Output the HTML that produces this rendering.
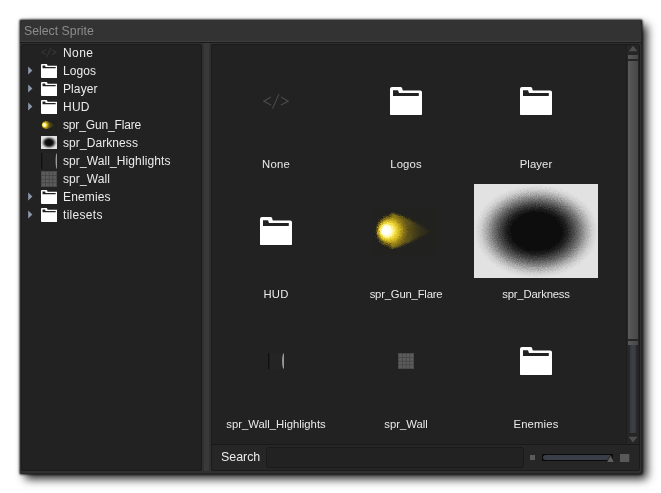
<!DOCTYPE html>
<html>
<head>
<meta charset="utf-8">
<title>Select Sprite</title>
<style>
html,body{margin:0;padding:0;background:#fff;}
body{width:661px;height:493px;position:relative;overflow:hidden;font-family:"Liberation Sans",sans-serif;}
.abs{position:absolute;display:block;}
.t,.lbl,#ttext,#stext{will-change:transform;}
#win{left:20px;top:20px;width:622px;height:454px;background:#303030;border-radius:2px;box-shadow:inset -1px -1px 0 #262626,0 0 2px 0.5px rgba(0,0,0,0.65),5px 5px 10px 0 rgba(0,0,0,0.85);}
#title{left:20px;top:20px;width:621px;height:21px;border-radius:2px 2px 0 0;background:#333333;border-bottom:1px solid #3e3e3e;}
#ttext{left:24px;top:24px;font-size:12.3px;line-height:15px;color:#8c8c8c;white-space:nowrap;}
#tline{left:20px;top:42px;width:622px;height:1px;background:#1a1a1a;}
.panel{background:#222222;border:1px solid #1b1b1b;border-radius:2px;box-sizing:border-box;}
#left{left:21px;top:44px;width:181px;height:427px;}
#split{left:204px;top:43px;width:5px;height:428px;background:#393939;}
#right{left:211px;top:44px;width:429px;height:427px;}
.t{font-size:12px;line-height:15px;color:#ebebeb;white-space:nowrap;}
.lbl{width:200px;text-align:center;font-size:11.3px;line-height:14px;color:#e9e9e9;white-space:nowrap;}
.dark{background:radial-gradient(ellipse closest-side at 50% 50%, #050505 0%, #080808 36%, #2c2c2c 52%, #6e6e6e 68%, #b4b4b4 82%, #dadada 93%, #e2e2e2 100%);background-color:#e2e2e2;}
#sbar{left:626px;top:45px;width:13px;height:399px;background:#262626;border-left:1px solid #1e1e1e;box-sizing:border-box;}
#bottom{left:212px;top:444px;width:427px;height:26px;background:#262626;border-top:1px solid #191919;box-sizing:border-box;border-radius:0 0 2px 2px;}
#stext{left:221.2px;top:449.5px;font-size:12.4px;line-height:15px;color:#ececec;}
#inp{left:266px;top:447px;width:258px;height:21px;box-sizing:border-box;border:1px solid #1a1a1a;border-radius:3px;background:#222;}
</style>
</head>
<body>
<div class="abs" id="win"></div>
<div class="abs" id="title"></div>
<div class="abs" id="ttext">Select Sprite</div>
<div class="abs" id="tline"></div>
<div class="abs panel" id="left"></div>
<div class="abs" id="split"></div>
<div class="abs panel" id="right"></div>
<svg class="abs" style="left:41px;top:48.0px" width="16" height="9" viewBox="0 0 26 15" fill="none" stroke="#3c3c3c" stroke-width="1.6" stroke-linecap="butt"><path d="M8 3 L0.8 7.2 L8 11"/><path d="M16 0 L9.6 14.5"/><path d="M18 3 L25.2 7.2 L18 11"/></svg><div class="abs t" style="left:62.8px;top:45.5px;letter-spacing:0.4px">None</div>
<svg class="abs" style="left:28px;top:65.5px" width="5" height="9" viewBox="0 0 5 9"><path fill="#8d98ad" d="M0.2 0.6 L4.4 4.5 L0.2 8.4 Z"/></svg><svg class="abs" style="left:41px;top:64.3px" width="16.3" height="14" viewBox="0 0 32 28.5" preserveAspectRatio="none"><path fill="#ffffff" fill-rule="evenodd" d="M0 2 Q0 0 2 0 L10.6 0 Q12.2 0 12.3 1.5 L12.4 2.4 Q12.5 3.4 13.4 3.4 L30.2 3.4 Q32 3.4 32 5.2 L32 26.7 Q32 28.5 30.2 28.5 L1.8 28.5 Q0 28.5 0 26.7 Z M3 3.3 L8 3.3 L9 6.1 L28.8 6.1 L28.8 8.9 L3 8.9 Z"/></svg><div class="abs t" style="left:62.8px;top:63.5px;letter-spacing:0.05px">Logos</div>
<svg class="abs" style="left:28px;top:83.5px" width="5" height="9" viewBox="0 0 5 9"><path fill="#8d98ad" d="M0.2 0.6 L4.4 4.5 L0.2 8.4 Z"/></svg><svg class="abs" style="left:41px;top:82.3px" width="16.3" height="14" viewBox="0 0 32 28.5" preserveAspectRatio="none"><path fill="#ffffff" fill-rule="evenodd" d="M0 2 Q0 0 2 0 L10.6 0 Q12.2 0 12.3 1.5 L12.4 2.4 Q12.5 3.4 13.4 3.4 L30.2 3.4 Q32 3.4 32 5.2 L32 26.7 Q32 28.5 30.2 28.5 L1.8 28.5 Q0 28.5 0 26.7 Z M3 3.3 L8 3.3 L9 6.1 L28.8 6.1 L28.8 8.9 L3 8.9 Z"/></svg><div class="abs t" style="left:62.8px;top:81.5px;letter-spacing:0.1px">Player</div>
<svg class="abs" style="left:28px;top:101.5px" width="5" height="9" viewBox="0 0 5 9"><path fill="#8d98ad" d="M0.2 0.6 L4.4 4.5 L0.2 8.4 Z"/></svg><svg class="abs" style="left:41px;top:100.3px" width="16.3" height="14" viewBox="0 0 32 28.5" preserveAspectRatio="none"><path fill="#ffffff" fill-rule="evenodd" d="M0 2 Q0 0 2 0 L10.6 0 Q12.2 0 12.3 1.5 L12.4 2.4 Q12.5 3.4 13.4 3.4 L30.2 3.4 Q32 3.4 32 5.2 L32 26.7 Q32 28.5 30.2 28.5 L1.8 28.5 Q0 28.5 0 26.7 Z M3 3.3 L8 3.3 L9 6.1 L28.8 6.1 L28.8 8.9 L3 8.9 Z"/></svg><div class="abs t" style="left:62.8px;top:99.5px;letter-spacing:0.25px">HUD</div>
<svg class="abs" style="left:41px;top:118.5px" width="16" height="12" viewBox="0 0 64 48"><defs><radialGradient id="fgt4" gradientUnits="userSpaceOnUse" cx="18.8" cy="23.9" r="18" fx="9.8" fy="23.6"><stop offset="0" stop-color="#ffffff"/><stop offset="0.22" stop-color="#ffffff"/><stop offset="0.32" stop-color="#fff9b0"/><stop offset="0.44" stop-color="#f2dc38"/><stop offset="0.58" stop-color="#d2b622" stop-opacity="0.95"/><stop offset="0.7" stop-color="#a48c18" stop-opacity="0.8"/><stop offset="0.86" stop-color="#6e5e12" stop-opacity="0.5"/><stop offset="1" stop-color="#3a3210" stop-opacity="0"/></radialGradient><linearGradient id="ftt4" gradientUnits="userSpaceOnUse" x1="18" x2="59" y1="0" y2="0"><stop offset="0" stop-color="#c8ac20" stop-opacity="0.9"/><stop offset="0.3" stop-color="#85721a" stop-opacity="0.8"/><stop offset="0.55" stop-color="#5a4e14" stop-opacity="0.65"/><stop offset="1" stop-color="#3a3210" stop-opacity="0.1"/></linearGradient><filter id="fbt4" x="-20%" y="-20%" width="140%" height="140%"><feGaussianBlur stdDeviation="1.2"/></filter><filter id="fnt4" x="0" y="0" width="100%" height="100%"><feTurbulence type="fractalNoise" baseFrequency="0.85" numOctaves="1" seed="3" result="n"/><feDisplacementMap in="SourceGraphic" in2="n" scale="4" xChannelSelector="R" yChannelSelector="G"/></filter></defs><rect x="0" y="0" width="64" height="48" fill="#21211f"/><g filter="url(#fnt4)"><path d="M17 6.5 C30 8 42 17 59 24.5 C42 31 30 39.5 17 41 Z" fill="url(#ftt4)" filter="url(#fbt4)"/><circle cx="18.8" cy="23.9" r="18" fill="url(#fgt4)"/></g></svg><div class="abs t" style="left:62.8px;top:117.5px;letter-spacing:-0.15px">spr_Gun_Flare</div>
<svg class="abs" style="left:41px;top:136.0px" width="16" height="13" viewBox="0 0 124 94" preserveAspectRatio="none"><defs><radialGradient id="dgdt" gradientUnits="userSpaceOnUse" cx="0" cy="0" r="1" gradientTransform="translate(62.5 47.5) scale(62 46.5)"><stop offset="0" stop-color="#070707"/><stop offset="0.38" stop-color="#070707"/><stop offset="0.5" stop-color="#232323"/><stop offset="0.6" stop-color="#4a4a4a"/><stop offset="0.7" stop-color="#767676"/><stop offset="0.8" stop-color="#a8a8a8"/><stop offset="0.9" stop-color="#d0d0d0"/><stop offset="1" stop-color="#e2e2e2"/></radialGradient><filter id="dndt" x="0" y="0" width="100%" height="100%"><feTurbulence type="fractalNoise" baseFrequency="0.9" numOctaves="1" seed="7" result="n"/><feDisplacementMap in="SourceGraphic" in2="n" scale="7" xChannelSelector="R" yChannelSelector="G"/></filter></defs><rect x="0" y="0" width="124" height="94" fill="#e2e2e2"/><rect x="-12" y="-12" width="148" height="118" fill="url(#dgdt)" filter="url(#dndt)"/></svg><div class="abs t" style="left:62.8px;top:135.5px;letter-spacing:0.08px">spr_Darkness</div>
<svg class="abs" style="left:41px;top:152.5px" width="16" height="16" viewBox="0 0 16 16"><rect x="0" y="0" width="16" height="16" fill="#242424"/><rect x="0" y="0" width="1.4" height="16" fill="#111111"/><path d="M16 0 Q14.6 0.8 14.6 8 Q14.6 15.2 16 16 Z" fill="#9a9a9a"/></svg><div class="abs t" style="left:62.8px;top:153.5px;letter-spacing:0.1px">spr_Wall_Highlights</div>
<svg class="abs" style="left:41px;top:170.5px" width="16" height="16" viewBox="0 0 16 16"><rect x="0" y="0" width="16" height="16" fill="#4a4a4a"/><rect x="1" y="1" width="14" height="14" fill="#5c5c5c"/><rect x="4.2" y="0.5" width="0.8" height="15" fill="#454545"/><rect x="0.5" y="4.2" width="15" height="0.8" fill="#454545"/><rect x="7.8" y="0.5" width="0.8" height="15" fill="#454545"/><rect x="0.5" y="7.8" width="15" height="0.8" fill="#454545"/><rect x="11.4" y="0.5" width="0.8" height="15" fill="#454545"/><rect x="0.5" y="11.4" width="15" height="0.8" fill="#454545"/></svg><div class="abs t" style="left:62.8px;top:171.5px;letter-spacing:0.1px">spr_Wall</div>
<svg class="abs" style="left:28px;top:191.5px" width="5" height="9" viewBox="0 0 5 9"><path fill="#8d98ad" d="M0.2 0.6 L4.4 4.5 L0.2 8.4 Z"/></svg><svg class="abs" style="left:41px;top:190.3px" width="16.3" height="14" viewBox="0 0 32 28.5" preserveAspectRatio="none"><path fill="#ffffff" fill-rule="evenodd" d="M0 2 Q0 0 2 0 L10.6 0 Q12.2 0 12.3 1.5 L12.4 2.4 Q12.5 3.4 13.4 3.4 L30.2 3.4 Q32 3.4 32 5.2 L32 26.7 Q32 28.5 30.2 28.5 L1.8 28.5 Q0 28.5 0 26.7 Z M3 3.3 L8 3.3 L9 6.1 L28.8 6.1 L28.8 8.9 L3 8.9 Z"/></svg><div class="abs t" style="left:62.8px;top:189.5px;letter-spacing:0.15px">Enemies</div>
<svg class="abs" style="left:28px;top:209.5px" width="5" height="9" viewBox="0 0 5 9"><path fill="#8d98ad" d="M0.2 0.6 L4.4 4.5 L0.2 8.4 Z"/></svg><svg class="abs" style="left:41px;top:208.3px" width="16.3" height="14" viewBox="0 0 32 28.5" preserveAspectRatio="none"><path fill="#ffffff" fill-rule="evenodd" d="M0 2 Q0 0 2 0 L10.6 0 Q12.2 0 12.3 1.5 L12.4 2.4 Q12.5 3.4 13.4 3.4 L30.2 3.4 Q32 3.4 32 5.2 L32 26.7 Q32 28.5 30.2 28.5 L1.8 28.5 Q0 28.5 0 26.7 Z M3 3.3 L8 3.3 L9 6.1 L28.8 6.1 L28.8 8.9 L3 8.9 Z"/></svg><div class="abs t" style="left:62.8px;top:207.5px;letter-spacing:0.3px">tilesets</div>
<svg class="abs" style="left:263px;top:93.8px" width="26" height="15" viewBox="0 0 26 15" fill="none" stroke="#4a4a4a" stroke-width="1.1" stroke-linecap="butt"><path d="M8 3 L0.8 7.2 L8 11"/><path d="M16 0 L9.6 14.5"/><path d="M18 3 L25.2 7.2 L18 11"/></svg><div class="abs lbl" style="left:176px;top:156.5px;letter-spacing:0.25px">None</div>
<svg class="abs" style="left:390px;top:86.5px" width="32" height="28.5" viewBox="0 0 32 28.5" preserveAspectRatio="none"><path fill="#ffffff" fill-rule="evenodd" d="M0 2 Q0 0 2 0 L10.6 0 Q12.2 0 12.3 1.5 L12.4 2.4 Q12.5 3.4 13.4 3.4 L30.2 3.4 Q32 3.4 32 5.2 L32 26.7 Q32 28.5 30.2 28.5 L1.8 28.5 Q0 28.5 0 26.7 Z M3 3.3 L8 3.3 L9 6.1 L28.8 6.1 L28.8 8.9 L3 8.9 Z"/></svg><div class="abs lbl" style="left:306px;top:156.5px;letter-spacing:0.1px">Logos</div>
<svg class="abs" style="left:520px;top:86.5px" width="32" height="28.5" viewBox="0 0 32 28.5" preserveAspectRatio="none"><path fill="#ffffff" fill-rule="evenodd" d="M0 2 Q0 0 2 0 L10.6 0 Q12.2 0 12.3 1.5 L12.4 2.4 Q12.5 3.4 13.4 3.4 L30.2 3.4 Q32 3.4 32 5.2 L32 26.7 Q32 28.5 30.2 28.5 L1.8 28.5 Q0 28.5 0 26.7 Z M3 3.3 L8 3.3 L9 6.1 L28.8 6.1 L28.8 8.9 L3 8.9 Z"/></svg><div class="abs lbl" style="left:436px;top:156.5px;letter-spacing:0.1px">Player</div>
<svg class="abs" style="left:260px;top:216.5px" width="32" height="28.5" viewBox="0 0 32 28.5" preserveAspectRatio="none"><path fill="#ffffff" fill-rule="evenodd" d="M0 2 Q0 0 2 0 L10.6 0 Q12.2 0 12.3 1.5 L12.4 2.4 Q12.5 3.4 13.4 3.4 L30.2 3.4 Q32 3.4 32 5.2 L32 26.7 Q32 28.5 30.2 28.5 L1.8 28.5 Q0 28.5 0 26.7 Z M3 3.3 L8 3.3 L9 6.1 L28.8 6.1 L28.8 8.9 L3 8.9 Z"/></svg><div class="abs lbl" style="left:176px;top:286.5px;letter-spacing:0.1px">HUD</div>
<svg class="abs" style="left:374px;top:207px" width="64" height="48" viewBox="0 0 64 48"><defs><radialGradient id="fgg4" gradientUnits="userSpaceOnUse" cx="18.8" cy="23.9" r="18" fx="9.8" fy="23.6"><stop offset="0" stop-color="#ffffff"/><stop offset="0.22" stop-color="#ffffff"/><stop offset="0.32" stop-color="#fff9b0"/><stop offset="0.44" stop-color="#f2dc38"/><stop offset="0.58" stop-color="#d2b622" stop-opacity="0.95"/><stop offset="0.7" stop-color="#a48c18" stop-opacity="0.8"/><stop offset="0.86" stop-color="#6e5e12" stop-opacity="0.5"/><stop offset="1" stop-color="#3a3210" stop-opacity="0"/></radialGradient><linearGradient id="ftg4" gradientUnits="userSpaceOnUse" x1="18" x2="59" y1="0" y2="0"><stop offset="0" stop-color="#c8ac20" stop-opacity="0.9"/><stop offset="0.3" stop-color="#85721a" stop-opacity="0.8"/><stop offset="0.55" stop-color="#5a4e14" stop-opacity="0.65"/><stop offset="1" stop-color="#3a3210" stop-opacity="0.1"/></linearGradient><filter id="fbg4" x="-20%" y="-20%" width="140%" height="140%"><feGaussianBlur stdDeviation="1.2"/></filter><filter id="fng4" x="0" y="0" width="100%" height="100%"><feTurbulence type="fractalNoise" baseFrequency="0.85" numOctaves="1" seed="3" result="n"/><feDisplacementMap in="SourceGraphic" in2="n" scale="4" xChannelSelector="R" yChannelSelector="G"/></filter></defs><rect x="0" y="0" width="64" height="48" fill="#21211f"/><g filter="url(#fng4)"><path d="M17 6.5 C30 8 42 17 59 24.5 C42 31 30 39.5 17 41 Z" fill="url(#ftg4)" filter="url(#fbg4)"/><circle cx="18.8" cy="23.9" r="18" fill="url(#fgg4)"/></g></svg><div class="abs lbl" style="left:306px;top:286.5px;letter-spacing:-0.2px">spr_Gun_Flare</div>
<svg class="abs" style="left:474px;top:184px" width="124" height="94" viewBox="0 0 124 94" preserveAspectRatio="none"><defs><radialGradient id="dgdg" gradientUnits="userSpaceOnUse" cx="0" cy="0" r="1" gradientTransform="translate(62.5 47.5) scale(62 46.5)"><stop offset="0" stop-color="#070707"/><stop offset="0.38" stop-color="#070707"/><stop offset="0.5" stop-color="#232323"/><stop offset="0.6" stop-color="#4a4a4a"/><stop offset="0.7" stop-color="#767676"/><stop offset="0.8" stop-color="#a8a8a8"/><stop offset="0.9" stop-color="#d0d0d0"/><stop offset="1" stop-color="#e2e2e2"/></radialGradient><filter id="dndg" x="0" y="0" width="100%" height="100%"><feTurbulence type="fractalNoise" baseFrequency="0.9" numOctaves="1" seed="7" result="n"/><feDisplacementMap in="SourceGraphic" in2="n" scale="7" xChannelSelector="R" yChannelSelector="G"/></filter></defs><rect x="0" y="0" width="124" height="94" fill="#e2e2e2"/><rect x="-12" y="-12" width="148" height="118" fill="url(#dgdg)" filter="url(#dndg)"/></svg><div class="abs lbl" style="left:436px;top:286.5px;letter-spacing:-0.17px">spr_Darkness</div>
<svg class="abs" style="left:268px;top:353px" width="16" height="16" viewBox="0 0 16 16"><rect x="0" y="0" width="16" height="16" fill="#242424"/><rect x="0" y="0" width="1.4" height="16" fill="#111111"/><path d="M16 0 Q14.1 1.0 14.1 8 Q14.1 15.0 16 16 Z" fill="#9a9a9a"/></svg><div class="abs lbl" style="left:176px;top:416.5px;letter-spacing:0px">spr_Wall_Highlights</div>
<svg class="abs" style="left:398px;top:353px" width="16" height="16" viewBox="0 0 16 16"><rect x="0" y="0" width="16" height="16" fill="#4a4a4a"/><rect x="1" y="1" width="14" height="14" fill="#5c5c5c"/><rect x="4.2" y="0.5" width="0.8" height="15" fill="#454545"/><rect x="0.5" y="4.2" width="15" height="0.8" fill="#454545"/><rect x="7.8" y="0.5" width="0.8" height="15" fill="#454545"/><rect x="0.5" y="7.8" width="15" height="0.8" fill="#454545"/><rect x="11.4" y="0.5" width="0.8" height="15" fill="#454545"/><rect x="0.5" y="11.4" width="15" height="0.8" fill="#454545"/></svg><div class="abs lbl" style="left:306px;top:416.5px;letter-spacing:0px">spr_Wall</div>
<svg class="abs" style="left:520px;top:346.5px" width="32" height="28.5" viewBox="0 0 32 28.5" preserveAspectRatio="none"><path fill="#ffffff" fill-rule="evenodd" d="M0 2 Q0 0 2 0 L10.6 0 Q12.2 0 12.3 1.5 L12.4 2.4 Q12.5 3.4 13.4 3.4 L30.2 3.4 Q32 3.4 32 5.2 L32 26.7 Q32 28.5 30.2 28.5 L1.8 28.5 Q0 28.5 0 26.7 Z M3 3.3 L8 3.3 L9 6.1 L28.8 6.1 L28.8 8.9 L3 8.9 Z"/></svg><div class="abs lbl" style="left:436px;top:416.5px;letter-spacing:0.15px">Enemies</div>
<div class="abs" id="sbar"></div>
<svg class="abs" style="left:627px;top:45px" width="13" height="399" viewBox="0 0 13 399"><defs><linearGradient id="th" x1="0" x2="1" y1="0" y2="0"><stop offset="0" stop-color="#5a5a5a"/><stop offset="1" stop-color="#474747"/></linearGradient><linearGradient id="gr" x1="0" x2="1" y1="0" y2="0"><stop offset="0" stop-color="#33363b"/><stop offset="0.45" stop-color="#3e4248"/><stop offset="1" stop-color="#33363b"/></linearGradient></defs><path d="M6 0.7 L10.4 6.3 L1.6 6.3 Z" fill="#4e4e4e"/><rect x="1" y="10" width="10" height="4" fill="url(#th)"/><rect x="1" y="16" width="10" height="278" fill="url(#th)"/><rect x="1" y="296" width="10" height="4" fill="url(#th)"/><rect x="2.7" y="300" width="6.6" height="88" fill="url(#gr)"/><path d="M1.6 391.8 L10.4 391.8 L6 397.4 Z" fill="#4e4e4e"/></svg>
<div class="abs" id="bottom"></div>
<div class="abs" id="stext">Search</div>
<div class="abs" id="inp"></div>
<svg class="abs" style="left:526px;top:450px" width="110" height="16" viewBox="0 0 110 16"><rect x="4" y="5" width="5" height="5" fill="#5a5a5a"/><rect x="16" y="4" width="71" height="7" fill="#0a0a0a"/><rect x="17" y="5" width="69" height="5" rx="2.5" fill="#3a3e49"/><path d="M84.5 5.2 L88.6 12.5 L80.4 12.5 Z" fill="#5e5e5e" stroke="#1c1c1c" stroke-width="0.8"/><rect x="94" y="4" width="9.3" height="8" fill="#595959"/></svg>
</body>
</html>
